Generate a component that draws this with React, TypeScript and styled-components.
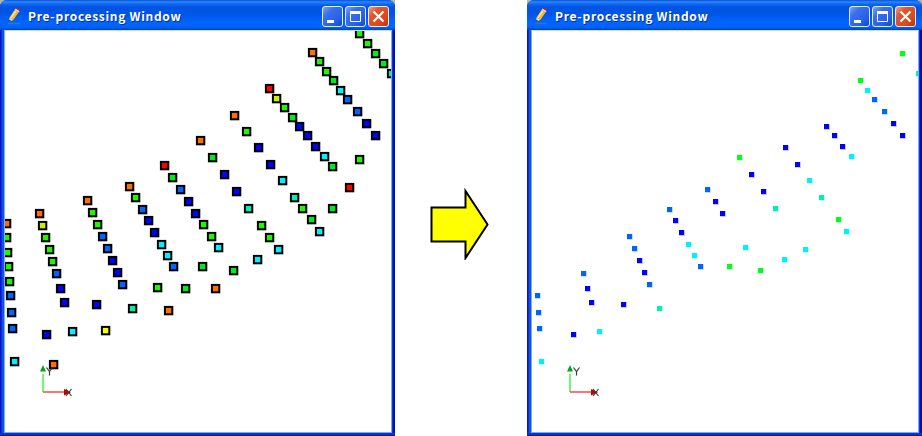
import React from "react";
import styled, { createGlobalStyle } from "styled-components";

const Global = createGlobalStyle`
  body { margin: 0; background: #fff; overflow: hidden; }
`;

const Page = styled.main`
  display: grid;
  grid-template-columns: 395px 132px 395px;
  width: 922px;
  height: 436px;
`;

const Corner = styled.div`
  background: linear-gradient(#b8b4a4 0 8px, #fff 8px);
`;

const Frame = styled.section`
  box-sizing: border-box;
  display: flex;
  flex-direction: column;
  height: 436px;
  padding: 0 3px 3px 4px;
  border-radius: 7px 7px 0 0;
  background: linear-gradient(90deg, #0c14c4 0 1px, #0a2fd6 1px 2px, #0c55e8 2px 4px, #0c55e8 4px 391px, #0838dc 391px 393px, #0010b0 393px);
  box-shadow: inset 0 -1px #0018a0, inset 0 -3px #0038d8;
`;

const TitleBar = styled.header`
  box-sizing: border-box;
  display: flex;
  align-items: flex-start;
  flex: none;
  height: 30px;
  margin: 0 -3px 0 -4px;
  padding: 6px 6px 0 7px;
  border-radius: 7px 7px 0 0;
  background: linear-gradient(#0a50d0 0, #2a86ff 2px, #1068f0 4px, #0054e3 7px, #0055e6 14px, #0062fa 20px, #0066ff 26px, #005cf0 28px, #0040c0 30px);
`;

const Title = styled.h1`
  flex: 1;
  margin: 2px 0 0 5px;
  color: #fff;
  font: bold 12px/16px "Noto Sans CJK JP", "Noto Sans", sans-serif;
  letter-spacing: 0.7px;
  white-space: nowrap;
  text-shadow: 1px 1px #06309c;
`;

const Buttons = styled.div`
  display: flex;
  gap: 2px;
`;

const Button = styled.button<{ $close?: boolean }>`
  box-sizing: border-box;
  display: grid;
  place-items: center;
  width: 21px;
  height: 21px;
  padding: 0;
  border: 1px solid #e4edff;
  border-radius: 3px;
  background: ${(p) =>
    p.$close
      ? "linear-gradient(135deg, #f0a080, #e0552c 30%, #dc4a1c 70%, #b83408)"
      : "linear-gradient(135deg, #7ca4fa, #3a70ee 30%, #2860e8 70%, #1048cc)"};
`;

const Viewport = styled.div`
  box-sizing: border-box;
  flex: 1;
  min-height: 0;
  border: 1px solid #7cacf4;
  border-top-color: #cadcf8;
  background: #fff;
  svg { display: block; }
`;

const Between = styled.div`
  display: flex;
  align-items: center;
  padding: 12px 0 0 34px;
`;

const colors = {
  o: "#ff6e00", r: "#ff0000", y: "#ffff00", l: "#c8f000",
  g: "#22f500", i: "#00eb1e", h: "#00eb1e",
  t: "#00f0b4", c: "#00f0ff", b: "#0064ff", n: "#0000ff",
};
type Key = keyof typeof colors;
type Sample = [number, number, Key];

const samples: Sample[] = [
  [6,223,"o"],[6,237,"g"],[7,252,"g"],[8,266,"g"],[9,281,"g"],[10,295,"b"],[11,312,"b"],[12,328,"b"],[14,361,"c"],
  [39,213,"o"],[42,225,"l"],[45,237,"g"],[49,249,"g"],[52,261,"g"],[56,273,"b"],[60,288,"n"],[64,302,"n"],
  [96,304,"n"],[46,334,"n"],[72,331,"c"],[105,330,"y"],[132,308,"t"],[168,310,"o"],[53,364,"o"],
  [87,200,"o"],[92,212,"g"],[97,224,"g"],[102,236,"b"],[107,248,"b"],[112,260,"n"],[117,272,"n"],[122,284,"b"],
  [129,186,"o"],[135,197,"g"],[142,209,"b"],[148,220,"n"],[154,232,"n"],[161,244,"c"],[167,255,"c"],[173,266,"b"],
  [164,165,"r"],[172,177,"i"],[180,189,"b"],[188,201,"n"],[195,213,"n"],[203,224,"g"],[211,236,"g"],[218,247,"c"],
  [202,266,"h"],[233,270,"h"],[157,287,"g"],[185,288,"i"],[215,288,"o"],
  [200,140,"o"],[212,157,"h"],[224,174,"n"],[236,191,"n"],[248,208,"t"],[261,225,"g"],[269,237,"g"],[278,249,"c"],[257,259,"c"],
  [234,115,"o"],[246,131,"g"],[258,147,"n"],[270,164,"n"],[282,180,"c"],[294,197,"t"],[302,208,"g"],[311,219,"h"],[319,231,"c"],
  [269,88,"r"],[276,98,"l"],[284,107,"g"],[292,117,"i"],[299,126,"n"],[307,135,"n"],[315,146,"n"],[324,156,"c"],[332,166,"i"],
  [332,208,"i"],[349,187,"r"],[359,159,"g"],
  [312,52,"o"],[319,61,"g"],[326,71,"g"],[333,80,"h"],[340,90,"c"],[347,99,"b"],[357,111,"b"],[366,123,"n"],[375,135,"n"],
  [359,33,"g"],[367,43,"g"],[375,53,"h"],[383,63,"i"],[391,73,"t"],
];
const kept: Key[] = ["h", "t", "c", "b", "n"];

function Axes() {
  return (
    <g>
      <path d="M43 392V374" stroke="#42f442" strokeWidth="1.5" />
      <path d="M43 392H65" stroke="#f44848" strokeWidth="1.5" />
      <path d="M40 371.500L43 365L46 371.500Z" fill="#00a810" />
      <path d="M64 389L71 392.300L64 395.500Z" fill="#c00000" />
      <g fill="none" stroke="#383838" strokeWidth="1.2">
        <path d="M46.500 367.500L49.500 371.500L52.500 367.500M49.500 371.500V375.500" />
        <path d="M66 389L71.500 396M71.500 389L66 396" />
      </g>
    </g>
  );
}

function Plot({ filtered }: { filtered?: boolean }) {
  const shown = filtered ? samples.filter((s) => kept.includes(s[2])) : samples;
  return (
    <svg width="386" height="401" viewBox="5 31 386 401">
      {shown.map(([x, y, k]) => (
        <g key={`${x}-${y}`}>
          {filtered ? (
            <>
              <rect x={x - 2} y={y - 2} width="6" height="6" fill={colors[k]} opacity=".22" />
              <rect x={x - 2} y={y - 2} width="5" height="5" fill={k === "h" ? "#00ff1e" : colors[k]} />
            </>
          ) : (
            <>
              <rect x={x - 4.1} y={y - 4.1} width="9.400" height="9.400" fill="#000" />
              <rect x={x - 2.1} y={y - 2.1} width="5.400" height="5.400" fill={colors[k]} />
            </>
          )}
        </g>
      ))}
      <Axes />
    </svg>
  );
}

function Pencil() {
  return (
    <svg width="16" height="20" viewBox="0 0 16 20">
      <path d="M1 17.500H13" stroke="#2b78c8" strokeWidth="1.5" />
      <path d="M2 16L2.500 11.500L6.500 13.800Z" fill="#f5dfb5" />
      <path d="M2 16L2.300 13.700L4.200 14.800Z" fill="#202020" />
      <path d="M2.500 11.500L7.500 4L11.500 6.500L6.500 13.800Z" fill="#ffb622" />
      <path d="M4 12L8.800 4.800" stroke="#ffe58a" strokeWidth="1.5" />
      <path d="M7.500 4L8.600 2.400L12.700 5L11.500 6.500Z" fill="#ded8d4" />
      <path d="M8.600 2.400Q10 1 12 2.300T12.700 5Z" fill="#b62830" />
    </svg>
  );
}

function Window({ filtered }: { filtered?: boolean }) {
  return (
    <Corner>
      <Frame>
        <TitleBar>
          <Pencil />
          <Title>Pre-processing Window</Title>
          <Buttons>
            <Button aria-label="Minimize">
              <svg width="19" height="19"><path d="M4 14.500H11" stroke="#fff" strokeWidth="3" /></svg>
            </Button>
            <Button aria-label="Maximize">
              <svg width="19" height="19"><path d="M4.500 5V14.500H14.500V5" fill="none" stroke="#fff" /><path d="M4 5.500H15" stroke="#fff" strokeWidth="3" /></svg>
            </Button>
            <Button $close aria-label="Close">
              <svg width="19" height="19"><path d="M4.500 4.500L14.500 14.500M14.500 4.500L4.500 14.500" stroke="#fff" strokeWidth="2.200" /></svg>
            </Button>
          </Buttons>
        </TitleBar>
        <Viewport>
          <Plot filtered={filtered} />
        </Viewport>
      </Frame>
    </Corner>
  );
}

export default function App() {
  return (
    <Page>
      <Global />
      <Window />
      <Between>
        <svg width="62" height="72" viewBox="429 188 62 72">
          <path d="M431.500 207.500H465.500V191L487.500 224.500L465.500 258V241.500H431.500Z" fill="#ff0" stroke="#000" strokeWidth="2" />
        </svg>
      </Between>
      <Window filtered />
    </Page>
  );
}
